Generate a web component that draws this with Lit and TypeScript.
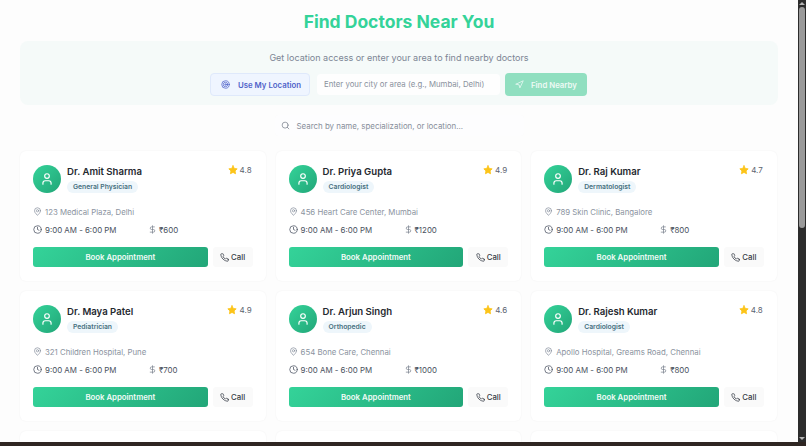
import { LitElement, html, css, svg } from 'lit';
import { customElement } from 'lit/decorators.js';

interface Doctor {
  name: string;
  spec: string;
  rating: string;
  address: string;
  fee: string;
}

const doctors: Doctor[] = [
  { name: 'Dr. Amit Sharma', spec: 'General Physician', rating: '4.8', address: '123 Medical Plaza, Delhi', fee: '₹600' },
  { name: 'Dr. Priya Gupta', spec: 'Cardiologist', rating: '4.9', address: '456 Heart Care Center, Mumbai', fee: '₹1200' },
  { name: 'Dr. Raj Kumar', spec: 'Dermatologist', rating: '4.7', address: '789 Skin Clinic, Bangalore', fee: '₹800' },
  { name: 'Dr. Maya Patel', spec: 'Pediatrician', rating: '4.9', address: '321 Children Hospital, Pune', fee: '₹700' },
  { name: 'Dr. Arjun Singh', spec: 'Orthopedic', rating: '4.6', address: '654 Bone Care, Chennai', fee: '₹1000' },
  { name: 'Dr. Rajesh Kumar', spec: 'Cardiologist', rating: '4.8', address: 'Apollo Hospital, Greams Road, Chennai', fee: '₹800' },
];

const icon = (size: number, body: unknown) => html`
  <svg class="icon" width=${size} height=${size} viewBox="0 0 24 24" fill="none" stroke="currentColor"
    stroke-width="2" stroke-linecap="round" stroke-linejoin="round">${body}</svg>
`;

const icons = {
  target: svg`<circle cx="12" cy="12" r="10"/><circle cx="12" cy="12" r="6"/><circle cx="12" cy="12" r="2"/>`,
  send: svg`<polygon points="3 11 22 2 13 21 11 13 3 11"/>`,
  search: svg`<circle cx="11" cy="11" r="8"/><path d="m21 21-4.3-4.3"/>`,
  user: svg`<path d="M19 21v-2a4 4 0 0 0-4-4H9a4 4 0 0 0-4 4v2"/><circle cx="12" cy="7" r="4"/>`,
  pin: svg`<path d="M20 10c0 6-8 12-8 12s-8-6-8-12a8 8 0 0 1 16 0Z"/><circle cx="12" cy="10" r="3"/>`,
  clock: svg`<circle cx="12" cy="12" r="10"/><polyline points="12 6 12 12 16 14"/>`,
  dollar: svg`<line x1="12" x2="12" y1="2" y2="22"/><path d="M17 5H9.5a3.5 3.5 0 0 0 0 7h5a3.5 3.5 0 0 1 0 7H6"/>`,
  phone: svg`<path d="M22 16.92v3a2 2 0 0 1-2.18 2 19.79 19.79 0 0 1-8.63-3.07 19.5 19.5 0 0 1-6-6 19.79 19.79 0 0 1-3.07-8.67A2 2 0 0 1 4.11 2h3a2 2 0 0 1 2 1.72 12.84 12.84 0 0 0 .7 2.81 2 2 0 0 1-.45 2.11L8.09 9.91a16 16 0 0 0 6 6l1.27-1.27a2 2 0 0 1 2.11-.45 12.84 12.84 0 0 0 2.81.7A2 2 0 0 1 22 16.92z"/>`,
  star: svg`<polygon fill="currentColor" points="12 2 15.09 8.26 22 9.27 17 14.14 18.18 21.02 12 17.77 5.82 21.02 7 14.14 2 9.27 8.91 8.26 12 2"/>`,
};

@customElement('app-root')
export class AppRoot extends LitElement {
  static styles = css`
    :host {
      display: flex;
      flex-direction: column;
      width: 806px;
      height: 446px;
      overflow: hidden;
      background: #fdfdfd;
      font-family: Inter, 'Liberation Sans', sans-serif;
      color: #1f2937;
      white-space: nowrap;
    }

    .window {
      flex: 1;
      min-height: 0;
      display: flex;
    }

    .page {
      flex: 1;
      min-width: 0;
      overflow: hidden;
      padding: 8px 20px 0;
    }

    .icon {
      display: block;
      flex: none;
    }

    h1 {
      margin: 0 0 6px;
      height: 27px;
      line-height: 28px;
      text-align: center;
      font-size: 17.5px;
      font-weight: 700;
      color: #34d399;
    }

    .location {
      height: 64px;
      box-sizing: border-box;
      padding: 8px 0 0;
      border-radius: 8px;
      background: #f5faf9;
      text-align: center;
    }

    .location p {
      margin: 0 0 7px;
      height: 17px;
      line-height: 17px;
      font-size: 9px;
      color: #7c8594;
    }

    .location-row {
      display: flex;
      justify-content: center;
      padding-right: 1px;
    }

    .btn-locate,
    .btn-nearby {
      display: flex;
      align-items: center;
      box-sizing: border-box;
      height: 23px;
      padding-left: 10px;
      border-radius: 4px;
      font-size: 7.8px;
      font-weight: 600;
    }

    .btn-locate {
      width: 100px;
      gap: 8px;
      border: 1px solid #dfe9fb;
      background: #eff5ff;
      color: #4f63c9;
    }

    .city {
      width: 183px;
      height: 21px;
      margin: 1px 5px 0 7px;
      box-sizing: border-box;
      padding-left: 7px;
      border-radius: 4px;
      background: #fefefe;
      line-height: 21px;
      font-size: 7.8px;
      color: #8a919d;
      text-align: left;
    }

    .btn-nearby {
      width: 82px;
      gap: 7px;
      background: #90dfc0;
      color: #eefaf5;
    }

    .search {
      display: flex;
      align-items: center;
      gap: 7px;
      width: 249px;
      height: 21px;
      margin: 10px auto 15px;
      padding-left: 6px;
      box-sizing: border-box;
      border-radius: 4px;
      background: #fdfdfe;
      box-shadow: 0 0 1px rgba(17, 24, 39, 0.03);
      font-size: 7.9px;
      color: #878e9a;
    }

    .search .icon {
      color: #7b828e;
    }

    .grid {
      display: grid;
      grid-template-columns: repeat(3, 245.6px);
      column-gap: 10px;
      row-gap: 10px;
    }

    .card {
      height: 130px;
      box-sizing: border-box;
      padding: 14px 13px 0;
      border-radius: 6px;
      background: #fff;
      box-shadow: 0 0 2px rgba(17, 24, 39, 0.06);
    }

    .card.stub {
      height: 30px;
    }

    .head {
      display: flex;
      align-items: flex-start;
    }

    .avatar {
      width: 28px;
      height: 28px;
      border-radius: 50%;
      display: flex;
      align-items: center;
      justify-content: center;
      flex: none;
      margin-right: 6px;
      background: linear-gradient(135deg, #34d399, #22a678);
      color: #fff;
    }

    .who {
      flex: 1;
      min-width: 0;
    }

    .name {
      height: 14px;
      line-height: 14px;
      font-size: 9.6px;
      font-weight: 600;
      color: #25292f;
    }

    .tag {
      width: fit-content;
      height: 12px;
      margin-top: 2px;
      padding: 0 6px;
      border-radius: 6px;
      background: #eef6fb;
      line-height: 12px;
      font-size: 6.8px;
      font-weight: 600;
      color: #46707f;
    }

    .rating {
      display: flex;
      align-items: center;
      gap: 2px;
      height: 10px;
      margin: 0 1px 0 0;
      font-size: 8px;
      color: #5b6370;
    }

    .rating .icon {
      color: #fcc419;
    }

    .address {
      display: flex;
      align-items: center;
      gap: 3px;
      height: 11px;
      margin-top: 13px;
      font-size: 7.8px;
      color: #8b93a0;
    }

    .address .icon {
      color: #8b93a0;
    }

    .meta {
      display: flex;
      height: 11px;
      margin-top: 7px;
      font-size: 7.9px;
      color: #4a5260;
    }

    .meta span {
      display: flex;
      align-items: center;
      gap: 3px;
    }

    .meta .hours {
      width: 115px;
    }

    .meta .fee {
      gap: 2px;
    }

    .meta .fee .icon {
      color: #7d8592;
    }

    .actions {
      display: flex;
      gap: 5px;
      margin-top: 12px;
    }

    .book {
      width: 175px;
      height: 20px;
      border-radius: 3px;
      background: linear-gradient(135deg, #34d399, #22a678);
      color: #f2fbf7;
      line-height: 20px;
      text-align: center;
      font-size: 7.8px;
      font-weight: 600;
    }

    .call {
      width: 40px;
      height: 20px;
      display: flex;
      align-items: center;
      justify-content: center;
      gap: 2px;
      border-radius: 3px;
      background: #fafafa;
      font-size: 7.8px;
      font-weight: 500;
      color: #353b45;
    }

    .scrollbar {
      width: 8px;
      flex: none;
      display: flex;
      flex-direction: column;
      align-items: center;
      background: #2c2c2c;
    }

    .arrow {
      width: 0;
      height: 0;
      margin: 2px 0;
      border-left: 3px solid transparent;
      border-right: 3px solid transparent;
    }

    .arrow.up {
      border-bottom: 3px solid #b5b5b5;
    }

    .arrow.down {
      border-top: 3px solid #b5b5b5;
    }

    .thumb {
      width: 6px;
      height: 221px;
      flex: none;
      border-radius: 3px;
      background: #9a9a9a;
    }

    .spacer {
      flex: 1;
    }

    .taskbar {
      height: 4px;
      flex: none;
      background: #2f2622;
    }
  `;

  private renderCard(d: Doctor) {
    return html`
      <article class="card">
        <div class="head">
          <div class="avatar">${icon(14, icons.user)}</div>
          <div class="who">
            <div class="name">${d.name}</div>
            <div class="tag">${d.spec}</div>
          </div>
          <div class="rating">${icon(10, icons.star)}${d.rating}</div>
        </div>
        <div class="address">${icon(9, icons.pin)}${d.address}</div>
        <div class="meta">
          <span class="hours">${icon(9, icons.clock)}9:00 AM - 6:00 PM</span>
          <span class="fee">${icon(9, icons.dollar)}${d.fee}</span>
        </div>
        <div class="actions">
          <div class="book">Book Appointment</div>
          <div class="call">${icon(9, icons.phone)}Call</div>
        </div>
      </article>
    `;
  }

  render() {
    return html`
      <div class="window">
        <main class="page">
          <h1>Find Doctors Near You</h1>
          <section class="location">
            <p>Get location access or enter your area to find nearby doctors</p>
            <div class="location-row">
              <div class="btn-locate">${icon(9, icons.target)}Use My Location</div>
              <div class="city">Enter your city or area (e.g., Mumbai, Delhi)</div>
              <div class="btn-nearby">${icon(9, icons.send)}Find Nearby</div>
            </div>
          </section>
          <div class="search">${icon(9, icons.search)}Search by name, specialization, or location...</div>
          <section class="grid">
            ${doctors.map((d) => this.renderCard(d))}
            <article class="card stub"></article>
            <article class="card stub"></article>
            <article class="card stub"></article>
          </section>
        </main>
        <div class="scrollbar">
          <div class="arrow up"></div>
          <div class="thumb"></div>
          <div class="spacer"></div>
          <div class="arrow down"></div>
        </div>
      </div>
      <div class="taskbar"></div>
    `;
  }
}
